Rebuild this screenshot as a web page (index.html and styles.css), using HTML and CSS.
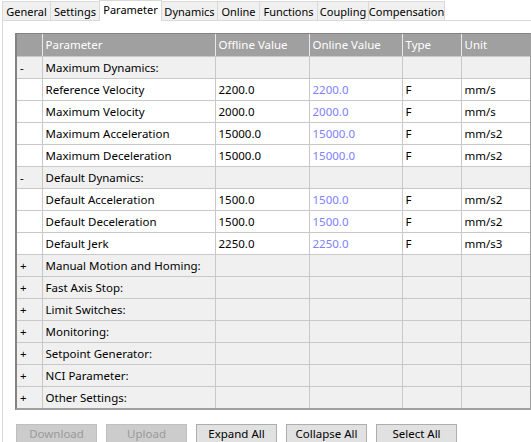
FILE: index.html
```html
<!DOCTYPE html>
<html>
<head>
<meta charset="utf-8">
<link rel="stylesheet" href="styles.css">
</head>
<body>
<div class="tabs">
  <div class="tab t-general">General</div>
  <div class="tab t-settings">Settings</div>
  <div class="tab active t-param">Parameter</div>
  <div class="tab t-dyn">Dynamics</div>
  <div class="tab t-online">Online</div>
  <div class="tab t-func">Functions</div>
  <div class="tab t-coup">Coupling</div>
  <div class="tab t-comp">Compensation</div>
</div>
<div class="panel">
  <div class="grid-wrap">
    <table class="grid">
      <colgroup>
        <col class="c0"><col class="c1"><col class="c2"><col class="c3"><col class="c4"><col class="c5">
      </colgroup>
      <thead>
        <tr><th></th><th>Parameter</th><th>Offline Value</th><th>Online Value</th><th>Type</th><th>Unit</th></tr>
      </thead>
      <tbody>
        <tr class="group"><td>-</td><td>Maximum Dynamics:</td><td></td><td></td><td></td><td></td></tr>
        <tr><td></td><td>Reference Velocity</td><td>2200.0</td><td class="online">2200.0</td><td>F</td><td>mm/s</td></tr>
        <tr><td></td><td>Maximum Velocity</td><td>2000.0</td><td class="online">2000.0</td><td>F</td><td>mm/s</td></tr>
        <tr><td></td><td>Maximum Acceleration</td><td>15000.0</td><td class="online">15000.0</td><td>F</td><td>mm/s2</td></tr>
        <tr><td></td><td>Maximum Deceleration</td><td>15000.0</td><td class="online">15000.0</td><td>F</td><td>mm/s2</td></tr>
        <tr class="group"><td>-</td><td>Default Dynamics:</td><td></td><td></td><td></td><td></td></tr>
        <tr><td></td><td>Default Acceleration</td><td>1500.0</td><td class="online">1500.0</td><td>F</td><td>mm/s2</td></tr>
        <tr><td></td><td>Default Deceleration</td><td>1500.0</td><td class="online">1500.0</td><td>F</td><td>mm/s2</td></tr>
        <tr><td></td><td>Default Jerk</td><td>2250.0</td><td class="online">2250.0</td><td>F</td><td>mm/s3</td></tr>
        <tr class="group"><td>+</td><td>Manual Motion and Homing:</td><td></td><td></td><td></td><td></td></tr>
        <tr class="group"><td>+</td><td>Fast Axis Stop:</td><td></td><td></td><td></td><td></td></tr>
        <tr class="group"><td>+</td><td>Limit Switches:</td><td></td><td></td><td></td><td></td></tr>
        <tr class="group"><td>+</td><td>Monitoring:</td><td></td><td></td><td></td><td></td></tr>
        <tr class="group"><td>+</td><td>Setpoint Generator:</td><td></td><td></td><td></td><td></td></tr>
        <tr class="group"><td>+</td><td>NCI Parameter:</td><td></td><td></td><td></td><td></td></tr>
        <tr class="group"><td>+</td><td>Other Settings:</td><td></td><td></td><td></td><td></td></tr>
      </tbody>
    </table>
  </div>
  <div class="buttons">
    <div class="btn disabled">Download</div>
    <div class="btn disabled">Upload</div>
    <div class="btn">Expand All</div>
    <div class="btn">Collapse All</div>
    <div class="btn">Select All</div>
  </div>
</div>
</body>
</html>
```
FILE: styles.css
```css
* { box-sizing: border-box; }
html, body { margin: 0; padding: 0; background: #ffffff; }
body {
  width: 531px;
  height: 442px;
  overflow: hidden;
  font-family: "Noto Sans", "Liberation Sans", sans-serif;
  font-size: 11.5px;
  color: #000000;
}
.tabs {
  display: flex;
  height: 21px;
  padding-left: 2px;
  align-items: flex-end;
  position: relative;
  font-size: 11px;
}
.tabs::after {
  content: "";
  position: absolute;
  left: 2px;
  right: 0;
  bottom: 0;
  height: 1px;
  background: #d9d9d9;
}
.tab {
  height: 19px;
  margin-bottom: 1px;
  background: #f0f0f0;
  border: 1px solid #d9d9d9;
  border-bottom: none;
  margin-left: -1px;
  display: flex;
  align-items: center;
  justify-content: center;
  line-height: 1;
  white-space: nowrap;
}
.tab:first-child { margin-left: 0; }
.tab.active {
  height: 21px;
  margin-bottom: 0;
  background: #ffffff;
  position: relative;
  z-index: 1;
  padding-bottom: 3px;
}
.t-general { width: 49px; }
.t-settings { width: 50px; }
.t-param { width: 63px; }
.t-dyn { width: 57px; }
.t-online { width: 43px; }
.t-func { width: 59px; }
.t-coup { width: 52px; }
.t-comp { width: 77px; }
.panel {
  margin-left: 2px;
  border-left: 1px solid #d9d9d9;
  height: 421px;
  padding: 12px 0 0 12px;
}
.grid-wrap {
  width: 516px;
  border-top: 1px solid #838383;
  border-left: 2px solid #838383;
  border-bottom: 2px solid #a0a0a0;
  border-right: 1px solid #a0a0a0;
}
.grid {
  border-collapse: collapse;
  table-layout: fixed;
  width: 513px;
}
.c0 { width: 25px; }
.c1 { width: 173px; }
.c2 { width: 94px; }
.c3 { width: 93px; }
.c4 { width: 59px; }
.c5 { width: 69px; }
.grid th {
  background: #a0a0a0;
  color: #ffffff;
  font-weight: normal;
  text-align: left;
  height: 22px;
  padding: 0 0 0 3px;
  border-left: 1px solid #e8e8e8;
  border-bottom: 1px solid #c8c8c8;
}
.grid th:first-child { border-left: none; }
.grid td {
  height: 22px;
  padding: 0 0 0 3px;
  border-left: 1px solid #c8c8c8;
  border-bottom: 1px solid #c8c8c8;
  white-space: nowrap;
  overflow: hidden;
  background: #ffffff;
}
.grid td:first-child { border-left: none; padding-left: 3px; }
.grid tr:last-child td { border-bottom: none; }
.grid tr.group td { background: #f0f0f0; }
.grid td.online { color: #8080ff; }
.buttons {
  display: flex;
  gap: 9px;
  margin-top: 14px;
  padding-left: 1px;
}
.btn {
  width: 81px;
  height: 19px;
  background: #e1e1e1;
  border: 1px solid #adadad;
  display: flex;
  align-items: center;
  justify-content: center;
  line-height: 1;
}
.btn.disabled {
  background: #cccccc;
  border-color: #bfbfbf;
  color: #9a9a9a;
}
```
